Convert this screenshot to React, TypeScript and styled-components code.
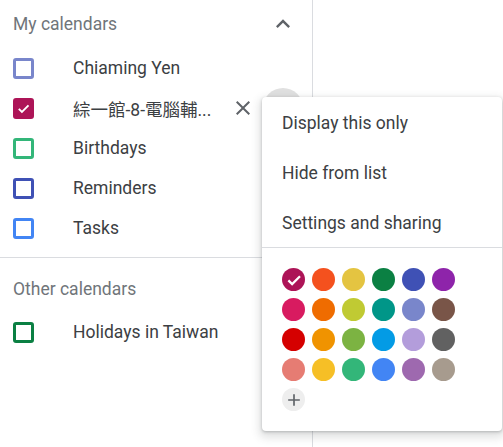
import React from 'react';
import styled, { createGlobalStyle } from 'styled-components';

const GlobalStyle = createGlobalStyle`
  html, body {
    margin: 0;
    padding: 0;
    background: #fff;
  }
  body {
    font-family: Roboto, "Noto Sans CJK TC", "Noto Sans", sans-serif;
    -webkit-font-smoothing: antialiased;
  }
`;

const Page = styled.div`
  position: relative;
  display: flex;
  height: 447px;
  overflow: hidden;
`;

const Sidebar = styled.div`
  width: 312px;
  border-right: 1px solid #dadce0;
  display: flex;
  flex-direction: column;
`;

const SectionHeader = styled.div<{ $spaced?: boolean }>`
  height: 47px;
  margin-top: ${(p) => (p.$spaced ? '7px' : '0')};
  padding: 0 9px 0 13px;
  display: flex;
  align-items: center;
  justify-content: space-between;
  font-size: 17.5px;
  color: #70757a;
`;

const List = styled.div`
  padding-top: 1px;
`;

const IconButton = styled.button<{ $hover?: boolean }>`
  width: 40px;
  height: 40px;
  flex: none;
  border: none;
  border-radius: 50%;
  padding: 0;
  display: flex;
  align-items: center;
  justify-content: center;
  background: ${(p) => (p.$hover ? '#e0e0e0' : 'transparent')};
  color: #5f6368;
  cursor: pointer;
`;

const Row = styled.div`
  height: 40px;
  padding: 0 9px 0 13px;
  display: flex;
  align-items: center;
`;

const Checkbox = styled.span<{ $color: string; $checked?: boolean }>`
  width: 21px;
  height: 21px;
  flex: none;
  box-sizing: border-box;
  border: 3px solid ${(p) => p.$color};
  border-radius: 3px;
  background: ${(p) => (p.$checked ? p.$color : '#fff')};
  display: flex;
  align-items: center;
  justify-content: center;
`;

const Label = styled.span`
  flex: 1;
  min-width: 0;
  margin-left: 39px;
  font-size: 17.5px;
  color: #3c4043;
  white-space: nowrap;
`;

const Divider = styled.div<{ $gap?: number }>`
  height: 1px;
  background: #dadce0;
  margin-top: ${(p) => p.$gap ?? 0}px;
`;

const Menu = styled.div`
  position: absolute;
  left: 262px;
  top: 97px;
  width: 240px;
  background: #fff;
  border-radius: 4px;
  box-shadow: 0 4px 8px 3px rgba(60, 64, 67, 0.15), 0 1px 3px rgba(60, 64, 67, 0.3);
`;

const MenuItem = styled.div`
  height: 50px;
  padding: 1px 20px 0;
  box-sizing: border-box;
  display: flex;
  align-items: center;
  font-size: 17.5px;
  color: #3c4043;
`;

const Palette = styled.div`
  display: grid;
  grid-template-columns: repeat(6, 23px);
  grid-auto-rows: 23px;
  gap: 7px;
  padding: 20px;
`;

const Swatch = styled.span<{ $color: string }>`
  width: 23px;
  height: 23px;
  border-radius: 50%;
  background: ${(p) => p.$color};
  display: flex;
  align-items: center;
  justify-content: center;
`;

const AddSwatch = styled(Swatch)`
  color: #5f6368;
`;

const Check = ({ size }: { size: number }) => (
  <svg width={size} height={size} viewBox="0 0 24 24">
    <path d="M4.5 12.5l5 5L20 7" fill="none" stroke="#fff" strokeWidth="3" />
  </svg>
);

const calendars = [
  { name: 'Chiaming Yen', color: '#7986cb' },
  { name: '綜一館-8-電腦輔...', color: '#ad1457', checked: true, active: true },
  { name: 'Birthdays', color: '#33b679' },
  { name: 'Reminders', color: '#3f51b5' },
  { name: 'Tasks', color: '#4285f4' },
];

const palette = [
  '#ad1457', '#f4511e', '#e4c441', '#0b8043', '#3f51b5', '#8e24aa',
  '#d81b60', '#ef6c00', '#c0ca33', '#009688', '#7986cb', '#795548',
  '#d50000', '#f09300', '#7cb342', '#039be5', '#b39ddb', '#616161',
  '#e67c73', '#f6bf26', '#33b679', '#4285f4', '#9e69af', '#a79b8e',
];

const App: React.FC = () => {
  return (
    <Page>
      <GlobalStyle />
      <Sidebar>
        <SectionHeader>
          My calendars
          <IconButton aria-label="Collapse">
            <svg width="28" height="28" viewBox="0 0 24 24">
              <path d="M7.41 15.41L12 10.83l4.59 4.58L18 14l-6-6-6 6z" fill="currentColor" />
            </svg>
          </IconButton>
        </SectionHeader>
        <List>
          {calendars.map((c) => (
            <Row key={c.name}>
              <Checkbox $color={c.color} $checked={c.checked}>
                {c.checked && <Check size={19} />}
              </Checkbox>
              <Label>{c.name}</Label>
              {c.active && (
                <>
                  <IconButton aria-label="Remove">
                    <svg width="24" height="24" viewBox="0 0 24 24">
                      <path
                        d="M19 6.41L17.59 5 12 10.59 6.41 5 5 6.41 10.59 12 5 17.59 6.41 19 12 13.41 17.59 19 19 17.59 13.41 12z"
                        fill="currentColor"
                      />
                    </svg>
                  </IconButton>
                  <IconButton $hover aria-label="Options" />
                </>
              )}
            </Row>
          ))}
        </List>
        <Divider $gap={9} />
        <SectionHeader $spaced>Other calendars</SectionHeader>
        <Row>
          <Checkbox $color="#0b8043" />
          <Label>Holidays in Taiwan</Label>
        </Row>
      </Sidebar>
      <Menu>
        <MenuItem>Display this only</MenuItem>
        <MenuItem>Hide from list</MenuItem>
        <MenuItem>Settings and sharing</MenuItem>
        <Divider />
        <Palette>
          {palette.map((color, i) => (
            <Swatch key={color + i} $color={color}>
              {i === 0 && <Check size={18} />}
            </Swatch>
          ))}
          <AddSwatch $color="#eeeeee">
            <svg width="20" height="20" viewBox="0 0 24 24">
              <path d="M19 13h-6v6h-2v-6H5v-2h6V5h2v6h6v2z" fill="currentColor" />
            </svg>
          </AddSwatch>
        </Palette>
      </Menu>
    </Page>
  );
};

export default App;
